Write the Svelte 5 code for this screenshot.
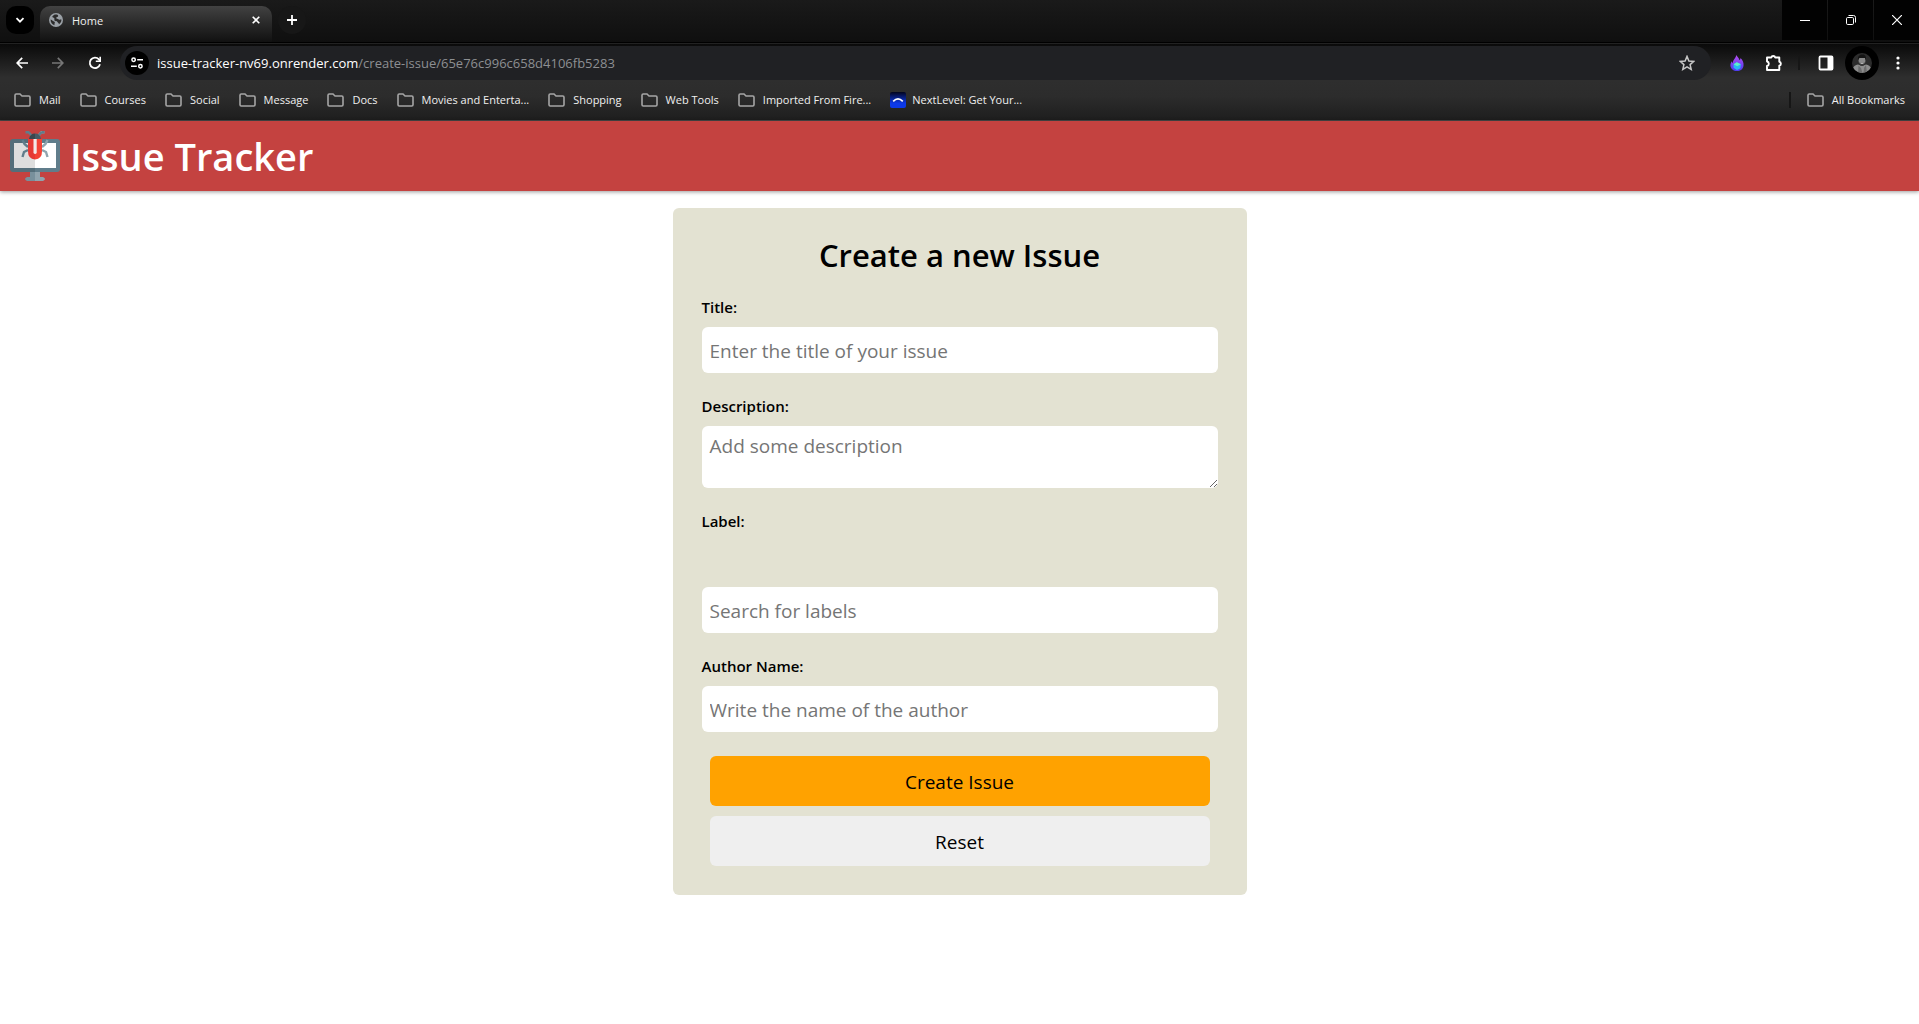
<script>
  const folders = [
    'Mail',
    'Courses',
    'Social',
    'Message',
    'Docs',
    'Movies and Enterta...',
    'Shopping',
    'Web Tools',
    'Imported From Fire...'
  ];
</script>

{#snippet folderIcon()}
  <svg class="folder" viewBox="0 0 17 14" width="17" height="14" aria-hidden="true">
    <path d="M1 2.2Q1 1 2.2 1H6l2 2h6.800Q16 3 16 4.200v7.600Q16 13 14.800 13H2.200Q1 13 1 11.800Z" />
  </svg>
{/snippet}

<div class="browser">
  <div class="tabstrip">
    <button class="tab-search" aria-label="Search tabs">
      <svg viewBox="0 0 10 10" width="10" height="10"><path d="M1.500 3.200 5 6.700 8.500 3.200" fill="none" stroke="#fff" stroke-width="1.800" /></svg>
    </button>
    <div class="tab">
      <svg viewBox="0 0 14 14" width="14" height="14" aria-hidden="true">
        <circle cx="7" cy="7" r="7" fill="#9aa0a6" />
        <path d="M5.800 1.600C8 1.200 9.300 1.800 9.200 3 9 4.200 7.300 3.800 7.200 5c0 1 1.700.8 2.600 1.400.8.700 1.200 0 2.600.2.200 2-.9 3.700-2.400 4.600-.2-1.200-1-1.500-1.600-2.200C7.900 8 6.400 8.400 5.500 7.600 4.800 6.800 6 6 5.200 5.200 4.500 4.500 3.900 4.600 3.200 4 3.800 2.800 4.600 2 5.800 1.600Z" fill="#2b2b2b" />
        <path d="M1.600 6.500c1 .2 1.600.8 2.300 1.500.7.600 1.900.5 2 1.600 0 .8-.8 1.200-.3 2.600C3.200 11.600 1.400 9.400 1.600 6.500Z" fill="#2b2b2b" />
      </svg>
      <span>Home</span>
      <button class="tab-close" aria-label="Close tab">
        <svg viewBox="0 0 8 8" width="8" height="8"><path d="m.7.7 6.600 6.600M7.300.7.7 7.300" stroke="#fff" stroke-width="1.600" /></svg>
      </button>
    </div>
    <button class="new-tab" aria-label="New tab">
      <svg viewBox="0 0 10 10" width="10" height="10"><path d="M5 0v10M0 5h10" stroke="#fff" stroke-width="1.800" /></svg>
    </button>
    <div class="window-controls">
      <button aria-label="Minimize"><svg viewBox="0 0 10 10" width="10" height="10"><path d="M0 5.500h10" stroke="#fff" /></svg></button>
      <button aria-label="Restore">
        <svg viewBox="0 0 10 10" width="10" height="10" fill="none" stroke="#fff"><rect x=".5" y="2.500" width="7" height="7" rx="1.200" /><path d="M2.500.5H7.500a2 2 0 0 1 2 2V7.500" /></svg>
      </button>
      <button aria-label="Close"><svg viewBox="0 0 10 10" width="10" height="10"><path d="m0 0 10 10M10 0 0 10" stroke="#fff" stroke-width="1.200" /></svg></button>
    </div>
  </div>

  <div class="toolbar">
    <div class="nav">
      <button aria-label="Back"><svg viewBox="0 0 12 12" width="12" height="12"><path d="M12 6H1.500M6.200.9 1.200 6l5 5.100" fill="none" stroke="#fff" stroke-width="1.700" /></svg></button>
      <button aria-label="Forward"><svg viewBox="0 0 12 12" width="12" height="12"><path d="M0 6h10.500M5.800.9l5 5.100-5 5.100" fill="none" stroke="#777" stroke-width="1.700" /></svg></button>
      <button aria-label="Reload"><svg viewBox="0 0 14 14" width="14" height="14"><path d="M12 8.300A5.200 5.200 0 1 1 10.900 3.400L12 4.600" fill="none" stroke="#fff" stroke-width="1.800" /><path d="M13 .8v5.200H7.800V4.400h3.600V.8Z" fill="#fff" /></svg></button>
    </div>
    <div class="omnibox">
      <button class="site-info" aria-label="View site information">
        <svg viewBox="0 0 12 12" width="12" height="12" fill="none" stroke="#fff" stroke-width="1.500"><circle cx="2.600" cy="2.700" r="1.700" /><path d="M6.200 2.700H12M0 9.300h5.800" /><circle cx="9.400" cy="9.300" r="1.700" /></svg>
      </button>
      <span class="url">issue-tracker-nv69.onrender.com<span class="path">/create-issue/65e76c996c658d4106fb5283</span></span>
      <button class="star" aria-label="Bookmark this page">
        <svg viewBox="0 0 16 16" width="16" height="16"><path d="m8 1.400 1.900 4.600 4.900.4-3.700 3.200 1.100 4.800L8 11.800l-4.200 2.600 1.100-4.800L1.200 6.400l4.900-.4Z" fill="none" stroke="#c7c7c7" stroke-width="1.500" /></svg>
      </button>
    </div>
    <div class="extensions">
      <button class="flame" aria-label="Flame extension">
        <svg viewBox="0 0 14 16" width="14" height="16">
          <defs><linearGradient id="flame" x1="0" y1="0" x2="0" y2="1"><stop offset="0" stop-color="#b44cf0" /><stop offset="1" stop-color="#4c3df2" /></linearGradient></defs>
          <path d="M6.300 0c.9 1.800 2.900 3 3.200 5.200.7-.4 1-1.200.9-2.100 2.200 2 3.600 4.600 3.100 7.600C13 14 10.500 16 7 16S.6 13.700.4 10.700C.3 8.800 1 7.400 1.800 6.200c.2.900.5 1.400 1.200 1.700C2.700 4.800 5.800 3.400 6.300 0Z" fill="url(#flame)" />
          <path d="m6.800 7.200 4 2.100-.4 3.900-3.400 1.700-3.500-2.100.1-3.600Z" fill="#29b7f6" />
          <path d="m6.800 7.200 4 2.100-3.600 1.900-3.600-2Z" fill="#5ff0c8" />
        </svg>
      </button>
      <button class="puzzle" aria-label="Extensions">
        <svg viewBox="0 0 18 18" width="18" height="18"><path d="M2 3.500h4.300a2 2 0 0 1 3.900 0h4.100v4.200a2 2 0 0 1 0 3.900v4.400H2v-4a2.300 2.300 0 0 0 0-4.500Z" fill="none" stroke="#fff" stroke-width="1.900" stroke-linejoin="round" /></svg>
      </button>
      <span class="divider"></span>
      <button class="panel" aria-label="Side panel">
        <svg viewBox="0 0 16 16" width="16" height="16"><rect x="1.500" y="1.500" width="13" height="13" rx="1" fill="none" stroke="#fff" stroke-width="1.800" /><path d="M9.500 1.500h5v13h-5Z" fill="#fff" /></svg>
      </button>
      <button class="avatar" aria-label="Profile">
        <svg viewBox="0 0 20 20" width="20" height="20">
          <defs><clipPath id="round"><circle cx="10" cy="10" r="10" /></clipPath></defs>
          <g clip-path="url(#round)">
            <rect width="20" height="20" fill="#2c2c2c" />
            <path d="M0 20c0-6 3-8 6-8.500l4 1.500 4-1.500c3 .5 6 2.500 6 8.500Z" fill="#8d8d8d" />
            <path d="M6.500 12.500 9 15l1.500 5H6ZM14 12l-2 3-.500 5h3.500Z" fill="#6c6c6c" />
            <ellipse cx="10" cy="7.500" rx="3.400" ry="4.300" fill="#8a8a8a" />
            <path d="M6 7C5.500 3 8 1.500 10.500 1.500 13.500 1.500 14.500 4 13.800 7L13 5H7.500Z" fill="#141414" />
            <path d="M7 9.500q3 1.500 6 0-.5 3.500-3 3.500t-3-3.500Z" fill="#3a3a3a" />
            <path d="M8.500 10.300h3v.8h-3Z" fill="#d5d5d5" />
          </g>
        </svg>
      </button>
      <button class="more" aria-label="Customize and control">
        <svg viewBox="0 0 4 14" width="4" height="14" fill="#fff"><circle cx="2" cy="2" r="1.600" /><circle cx="2" cy="7" r="1.600" /><circle cx="2" cy="12" r="1.600" /></svg>
      </button>
    </div>
  </div>

  <nav class="bookmarks" aria-label="Bookmarks">
    {#each folders as name}
      <button>{@render folderIcon()}<span>{name}</span></button>
    {/each}
    <a href="#nextlevel">
      <svg viewBox="0 0 16 16" width="16" height="16" aria-hidden="true">
        <defs><linearGradient id="night" x1="0" y1="0" x2="0" y2="1"><stop offset="0" stop-color="#02041c" /><stop offset=".7" stop-color="#0c39e8" /></linearGradient></defs>
        <rect width="16" height="16" rx="2" fill="url(#night)" />
        <path d="M3.200 9.300Q8 4.500 12.800 9.300" fill="none" stroke="#fff" stroke-width="1.700" />
      </svg>
      <span>NextLevel: Get Your...</span>
    </a>
    <button class="all">{@render folderIcon()}<span>All Bookmarks</span></button>
  </nav>
</div>

<header>
  <svg class="logo" viewBox="0 0 50 50" width="50" height="50" aria-hidden="true">
    <path d="M20 40h5v7h-5Z" fill="#78909c" /><path d="M25 40h5v7h-5Z" fill="#90a4ae" />
    <path d="M17 46h8v4h-8q-4-2 0-4Z" fill="#78909c" /><path d="M25 46h8q4 2 0 4h-8Z" fill="#90a4ae" />
    <path d="M3 8h22v33H3q-3 0-3-3V11q0-3 3-3Z" fill="#546e7a" /><path d="M25 8h22q3 0 3 3v27q0 3-3 3H25Z" fill="#607d8b" />
    <path d="M4 12h21v25H4Z" fill="#dedede" /><path d="M25 12h21v25H25Z" fill="#fff" />
    <path d="M15.500 1.200h3L22 5M18 16l-3.500-3-2-4M18 19l-4 2-1.500 5" fill="none" stroke="#607d8b" stroke-width="2.400" />
    <path d="M34.500 1.200h-3L28 5M32 16l3.500-3 2-4M32 19l4 2 1.500 5" fill="none" stroke="#90a4ae" stroke-width="2.400" />
    <path d="M31.500 1.200H34.500M31.500 1.200 28 5" fill="none" stroke="#607d8b" stroke-width="2.400" />
    <path d="M19 8q1-5.500 6-5.500V8Z" fill="#37474f" /><path d="M25 2.500q5 0 6 5.500h-6Z" fill="#455a64" />
    <path d="M18 8h7v20.500q-7-.5-7-8Z" fill="#e53935" /><path d="M25 8h7v12.500q0 7.500-7 8Z" fill="#f44336" />
    <path d="M23.500 8h3.200v14q-1.600 2-3.200 0Z" fill="#f3e9e9" />
  </svg>
  <h1>Issue Tracker</h1>
</header>

<main>
  <form onsubmit={(e) => e.preventDefault()}>
    <h2>Create a new Issue</h2>
    <div class="field">
      <label for="title">Title:</label>
      <input id="title" type="text" placeholder="Enter the title of your issue" />
    </div>
    <div class="field">
      <label for="description">Description:</label>
      <textarea id="description" rows="2" placeholder="Add some description"></textarea>
    </div>
    <div class="field">
      <label for="labels">Label:</label>
      <div class="selected-labels"></div>
      <input id="labels" type="text" placeholder="Search for labels" />
    </div>
    <div class="field">
      <label for="author">Author Name:</label>
      <input id="author" type="text" placeholder="Write the name of the author" />
    </div>
    <div class="actions">
      <button class="create" type="submit">Create Issue</button>
      <button class="reset" type="reset">Reset</button>
    </div>
  </form>
</main>

<style>
  :global(body) {
    background: #fff;
    font-family: "Trebuchet MS", "Open Sans", sans-serif;
  }
  button,
  input,
  textarea {
    font: inherit;
    border: 0;
    margin: 0;
    padding: 0;
  }
  svg {
    display: block;
    flex: none;
  }

  .browser {
    font-family: "Segoe UI", "Open Sans", sans-serif;
    font-size: 11px;
    color: #f0f0f0;
    border-bottom: 1px solid #454545;
  }
  .browser button {
    display: flex;
    align-items: center;
    justify-content: center;
    flex: none;
    color: inherit;
    background: none;
  }
  .tabstrip {
    display: flex;
    align-items: flex-start;
    height: 43px;
    padding-left: 6px;
    background: linear-gradient(#1a1a1a, #0f0f0f);
    border-bottom: 1px solid #000;
    box-sizing: border-box;
  }
  .browser .tab-search {
    width: 28px;
    height: 28px;
    margin: 6px 6px 0 0;
    border-radius: 10px;
    background: #000;
  }
  .tab {
    display: flex;
    align-items: center;
    gap: 9px;
    width: 232px;
    height: 36px;
    margin-top: 6px;
    padding: 0 12px 8px 9px;
    border-radius: 10px 10px 0 0;
    background: linear-gradient(#424242, #2b2b2b 45%, #111);
    box-sizing: border-box;
  }
  .browser .tab-close {
    margin-left: auto;
  }
  .browser .new-tab {
    width: 28px;
    height: 28px;
    margin: 6px 0 0 6px;
    border-radius: 14px;
    background: #171717;
  }
  .window-controls {
    display: flex;
    gap: 1px;
    margin-left: auto;
  }
  .browser .window-controls button {
    width: 45px;
    height: 40px;
    background: #020202;
  }

  .toolbar {
    display: flex;
    align-items: center;
    padding: 2px 19px 1px 16px;
    border-top: 1px solid #222;
    background: linear-gradient(#0a0a0a, #2e2e2e 90%);
  }
  .nav {
    display: flex;
    align-items: center;
    gap: 24px;
    margin-right: 18px;
  }
  .omnibox {
    display: flex;
    align-items: center;
    flex: 1;
    height: 34px;
    padding: 0 16px 0 5px;
    border-radius: 17px;
    background: #202124;
    box-sizing: border-box;
  }
  .browser .site-info {
    width: 24px;
    height: 24px;
    border-radius: 12px;
    background: #000;
  }
  .url {
    flex: 1;
    padding-left: 8px;
    font-size: 13px;
    line-height: 20px;
    color: #fff;
  }
  .path {
    color: #8d8f92;
  }
  .extensions {
    display: flex;
    align-items: center;
    padding-left: 19px;
  }
  .puzzle {
    margin-left: 21px;
  }
  .divider {
    width: 2px;
    height: 14px;
    margin: 0 18px 0 15px;
    background: #161616;
  }
  .browser .avatar {
    width: 34px;
    height: 34px;
    margin: 0 17px 0 11px;
    border-radius: 17px;
    background: #000;
  }

  .bookmarks {
    display: flex;
    align-items: center;
    gap: 19px;
    height: 37px;
    padding: 0 14px 2px;
    background: linear-gradient(#2e2e2e, #2c2c2c 40%, #1e1e1e);
  }
  .browser .bookmarks button,
  .bookmarks a {
    display: flex;
    align-items: center;
    gap: 8px;
    flex: none;
    line-height: 16px;
    color: inherit;
    text-decoration: none;
    white-space: nowrap;
  }
  .bookmarks a {
    gap: 6px;
  }
  .folder path {
    fill: none;
    stroke: #a5a5a5;
    stroke-width: 1.600;
  }
  .browser .bookmarks .all {
    margin-left: auto;
    padding-left: 16px;
    border-left: 2px solid #161616;
  }

  header {
    display: flex;
    align-items: center;
    gap: 10px;
    height: 70px;
    padding: 0 10px;
    background: #c44240;
    box-shadow: 0 1px 4px rgba(0, 0, 0, 0.4);
  }
  h1 {
    margin: 0;
    font-size: 38px;
    line-height: 50px;
    font-weight: 600;
    color: #fff;
  }

  main {
    padding: 17px 20px 20px;
  }
  form {
    display: flex;
    flex-direction: column;
    gap: 23px;
    max-width: 574px;
    margin: 0 auto;
    padding: 29px;
    border-radius: 6px;
    background: #e3e2d2;
    box-sizing: border-box;
  }
  h2 {
    margin: 0;
    font-size: 31px;
    line-height: 37px;
    font-weight: 600;
    text-align: center;
    color: #000;
  }
  .field {
    display: flex;
    flex-direction: column;
    gap: 10px;
  }
  label {
    font-size: 15px;
    line-height: 20px;
    font-weight: 600;
    color: #000;
  }
  input,
  textarea {
    width: 100%;
    font-size: 19px;
    border-radius: 6px;
    background: #fff;
    color: #000;
    box-sizing: border-box;
  }
  input {
    height: 46px;
    padding: 2px 8px 0;
  }
  textarea {
    display: block;
    padding: 8px 8px 4px;
    line-height: 25px;
    resize: vertical;
  }
  input::placeholder,
  textarea::placeholder {
    color: #757575;
  }
  .selected-labels {
    min-height: 36px;
  }
  .actions {
    display: flex;
    flex-direction: column;
    gap: 10px;
    padding: 1px 8px 0;
  }
  .actions button {
    height: 50px;
    padding-top: 2px;
    border-radius: 6px;
    font-size: 19px;
    color: #000;
  }
  .create {
    background: #ffa200;
  }
  .reset {
    background: #efefef;
  }
</style>
